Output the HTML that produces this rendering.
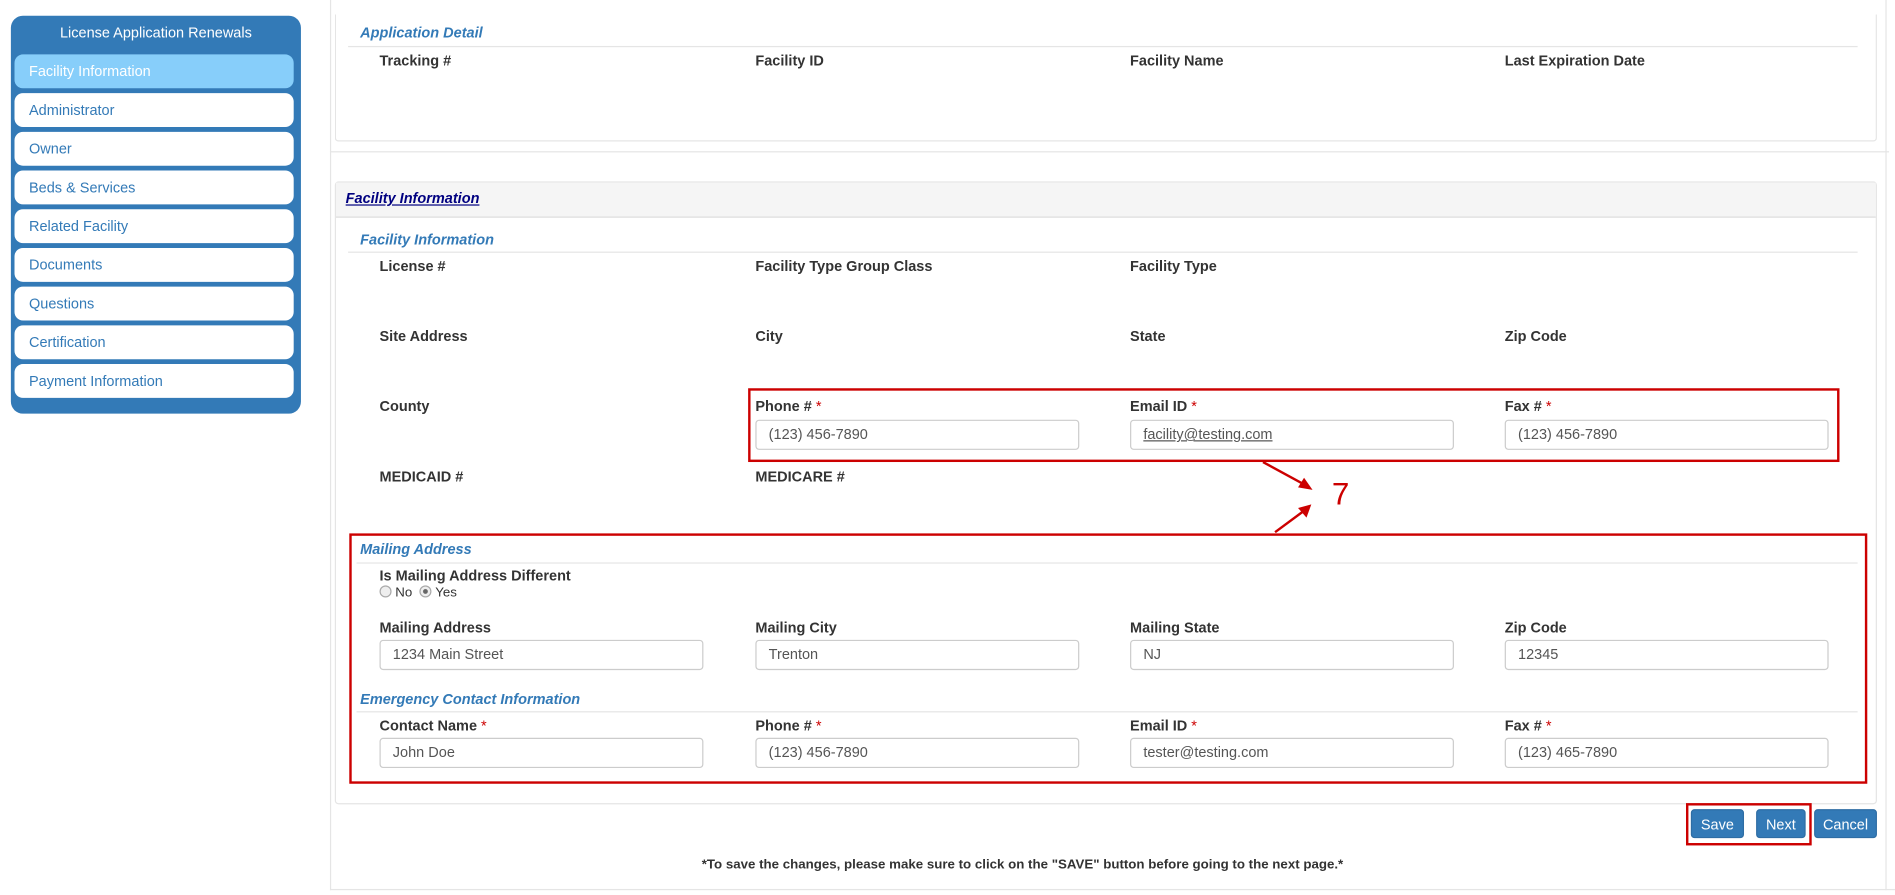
<!DOCTYPE html>
<html><head><meta charset="utf-8">
<style>
html,body{margin:0;padding:0;background:#fff;width:1895px;height:895px;overflow:hidden}
#w{position:absolute;left:0;top:0;width:1568px;height:740px;transform:scale(1.2086,1.2095);transform-origin:0 0;font-family:"Liberation Sans",Arial,sans-serif;font-size:12px;color:#333}
.a{position:absolute}
.side{left:9px;top:13px;width:240px;height:329px;background:#337ab7;border-radius:10px}
.sh{left:0;top:7px;width:240px;text-align:center;color:#fff;font-size:12px}
.it{left:3px;width:231px;height:28px;background:#fff;border-radius:7px;color:#337ab7;line-height:28px;padding-left:12px;box-sizing:border-box;font-size:12px}
.lb{font-weight:bold;font-size:12px;color:#333}
.hd{font-weight:bold;font-style:italic;color:#337ab7;font-size:12px}
.ln{height:1px;background:#e5e5e5}
.in{width:268px;height:25px;border:1px solid #ccc;border-radius:3px;box-sizing:border-box;padding-left:10px;line-height:23px;font-size:12px;color:#555}
.st{color:#c00;font-weight:normal}
.rb{border:2px solid #c00;box-sizing:border-box}
.bt{height:24px;background:#337ab7;color:#fff;border-radius:3px;text-align:center;line-height:24px;font-size:12px;border:1px solid #2e6da4;box-sizing:border-box}
</style></head><body><div id="w">
<div class="a side">
<div class="a sh">License Application Renewals</div>
<div class="a it" style="top:32px;background:#87cefa;color:#fff">Facility Information</div>
<div class="a it" style="top:64px">Administrator</div>
<div class="a it" style="top:96px">Owner</div>
<div class="a it" style="top:128px">Beds &amp; Services</div>
<div class="a it" style="top:160px">Related Facility</div>
<div class="a it" style="top:192px">Documents</div>
<div class="a it" style="top:224px">Questions</div>
<div class="a it" style="top:256px">Certification</div>
<div class="a it" style="top:288px">Payment Information</div>
</div>

<div class="a" style="left:273px;top:0;width:1px;height:736px;background:#e5e5e5"></div>
<div class="a" style="left:273px;top:735px;width:1295px;height:1px;background:#e5e5e5"></div>
<div class="a" style="left:1560px;top:0;width:1px;height:736px;background:#e5e5e5"></div>
<div class="a" style="left:277px;top:12px;width:1276px;height:105px;border:1px solid #e5e5e5;border-top:0;border-radius:0 0 3px 3px;box-sizing:border-box"></div>
<div class="a" style="left:273px;top:125px;width:1290px;height:1px;background:#e5e5e5"></div>
<div class="a hd" style="left:298px;top:20px">Application Detail</div>
<div class="a ln" style="left:288px;top:38px;width:1249px"></div>
<div class="a lb" style="left:314px;top:43px">Tracking #</div>
<div class="a lb" style="left:625px;top:43px">Facility ID</div>
<div class="a lb" style="left:935px;top:43px">Facility Name</div>
<div class="a lb" style="left:1245px;top:43px">Last Expiration Date</div>

<div class="a" style="left:277px;top:150px;width:1276px;height:515px;border:1px solid #e5e5e5;border-radius:3px;box-sizing:border-box"></div>
<div class="a" style="left:278px;top:151px;width:1274px;height:28px;background:#f5f5f5;border-bottom:1px solid #ddd"></div>
<div class="a" style="left:286px;top:157px;font-weight:bold;font-style:italic;text-decoration:underline;color:#000080">Facility Information</div>
<div class="a hd" style="left:298px;top:191px">Facility Information</div>
<div class="a ln" style="left:288px;top:208px;width:1249px"></div>
<div class="a lb" style="left:314px;top:213px">License #</div>
<div class="a lb" style="left:625px;top:213px">Facility Type Group Class</div>
<div class="a lb" style="left:935px;top:213px">Facility Type</div>
<div class="a lb" style="left:314px;top:271px">Site Address</div>
<div class="a lb" style="left:625px;top:271px">City</div>
<div class="a lb" style="left:935px;top:271px">State</div>
<div class="a lb" style="left:1245px;top:271px">Zip Code</div>
<div class="a lb" style="left:314px;top:329px">County</div>
<div class="a lb" style="left:625px;top:329px">Phone # <span class="st">*</span></div>
<div class="a lb" style="left:935px;top:329px">Email ID <span class="st">*</span></div>
<div class="a lb" style="left:1245px;top:329px">Fax # <span class="st">*</span></div>
<div class="a in" style="left:625px;top:347px">(123) 456-7890</div>
<div class="a in" style="left:935px;top:347px"><u>facility@testing.com</u></div>
<div class="a in" style="left:1245px;top:347px">(123) 456-7890</div>
<div class="a rb" style="left:619px;top:321px;width:903px;height:61px"></div>
<div class="a lb" style="left:314px;top:387px">MEDICAID #</div>
<div class="a lb" style="left:625px;top:387px">MEDICARE #</div>

<svg class="a" style="left:1030px;top:375px" width="70" height="75">
<line x1="15" y1="7" x2="50" y2="26" stroke="#c00" stroke-width="2"/>
<polygon points="56,30 44,28 49,20" fill="#c00"/>
<line x1="25" y1="65" x2="48" y2="48" stroke="#c00" stroke-width="2"/>
<polygon points="55,42 51,53 44,45" fill="#c00"/>
</svg>
<div class="a" style="left:1102px;top:393px;color:#c00;font-size:26px">7</div>

<div class="a rb" style="left:289px;top:441px;width:1256px;height:207px"></div>
<div class="a hd" style="left:298px;top:447px">Mailing Address</div>
<div class="a ln" style="left:295px;top:465px;width:1242px"></div>
<div class="a lb" style="left:314px;top:469px">Is Mailing Address Different</div>
<div class="a" style="left:314px;top:484px;font-size:11px">
<span style="display:inline-block;width:8px;height:8px;border:1px solid #aaa;border-radius:50%;vertical-align:-1px;background:#eee"></span> No&nbsp;
<span style="display:inline-block;width:8px;height:8px;border:1px solid #aaa;border-radius:50%;vertical-align:-1px;background:radial-gradient(#666 30%,#eee 40%)"></span> Yes</div>
<div class="a lb" style="left:314px;top:512px">Mailing Address</div>
<div class="a lb" style="left:625px;top:512px">Mailing City</div>
<div class="a lb" style="left:935px;top:512px">Mailing State</div>
<div class="a lb" style="left:1245px;top:512px">Zip Code</div>
<div class="a in" style="left:314px;top:529px">1234 Main Street</div>
<div class="a in" style="left:625px;top:529px">Trenton</div>
<div class="a in" style="left:935px;top:529px">NJ</div>
<div class="a in" style="left:1245px;top:529px">12345</div>
<div class="a hd" style="left:298px;top:571px">Emergency Contact Information</div>
<div class="a ln" style="left:295px;top:588px;width:1242px"></div>
<div class="a lb" style="left:314px;top:593px">Contact Name <span class="st">*</span></div>
<div class="a lb" style="left:625px;top:593px">Phone # <span class="st">*</span></div>
<div class="a lb" style="left:935px;top:593px">Email ID <span class="st">*</span></div>
<div class="a lb" style="left:1245px;top:593px">Fax # <span class="st">*</span></div>
<div class="a in" style="left:314px;top:610px">John Doe</div>
<div class="a in" style="left:625px;top:610px">(123) 456-7890</div>
<div class="a in" style="left:935px;top:610px">tester@testing.com</div>
<div class="a in" style="left:1245px;top:610px">(123) 465-7890</div>

<div class="a bt" style="left:1399px;top:669px;width:44px">Save</div>
<div class="a bt" style="left:1453px;top:669px;width:41px">Next</div>
<div class="a bt" style="left:1501px;top:669px;width:52px">Cancel</div>
<div class="a rb" style="left:1395px;top:664px;width:104px;height:35px"></div>
<div class="a" style="left:273px;top:709px;width:1146px;text-align:center;font-weight:bold;font-size:11px;color:#333">*To save the changes, please make sure to click on the "SAVE" button before going to the next page.*</div>
</div></body></html>
